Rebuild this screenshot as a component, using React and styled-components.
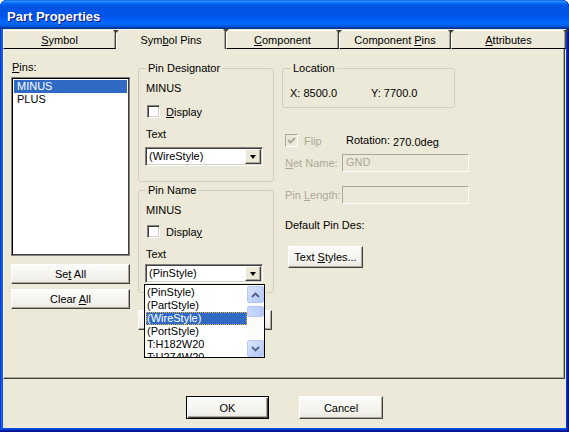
import React from 'react';
import styled, { createGlobalStyle } from 'styled-components';

const Global = createGlobalStyle`
  html, body { margin: 0; padding: 0; background: #fff; }
  body {
    width: 569px; height: 432px; overflow: hidden;
    font-family: "Liberation Sans", Arial, sans-serif; font-size: 11px; color: #000;
  }
  * { box-sizing: border-box; }
`;

const FACE = '#ECE9D8';

const Window = styled.div`
  width: 569px;
  height: 432px;
  background: #0855dd;
  border-radius: 7px 7px 0 0;
  display: flex;
  flex-direction: column;
  overflow: hidden;
  box-shadow: inset -1px -1px #00138c, inset 1px 1px #0831d9, inset -2px -2px #001ea0,
    inset 2px 2px #166aee, inset -3px -3px #003bda, inset 3px 3px #0855dd;
`;

const TitleBar = styled.div`
  height: 29px;
  flex: 0 0 29px;
  border-radius: 7px 7px 0 0;
  padding: 3px 0 0 7px;
  display: flex;
  align-items: center;
  background: linear-gradient(180deg, #0058ee 0%, #3593ff 4%, #288eff 6%, #127dff 8%, #036ffc 10%,
    #0262ee 14%, #0057e5 20%, #0054e3 24%, #0055eb 56%, #005bf5 66%, #026afe 76%, #0062ef 86%,
    #0052d6 92%, #0040ab 94%, #003092 100%);
`;

const Title = styled.span`
  font-family: "Liberation Sans", Arial, sans-serif;
  font-weight: bold;
  font-size: 13px;
  color: #fff;
  text-shadow: 1px 1px #0f1089;
`;

const Body = styled.div`
  flex: 1;
  margin: 0 3px 4px 3px;
  background: ${FACE};
  display: flex;
  flex-direction: column;
`;

const TabStrip = styled.div`
  height: 20px;
  flex: 0 0 20px;
  display: flex;
  align-items: flex-end;
`;

const Tab = styled.div`
  position: relative;
  flex: 0 0 ${p => p.$w}px;
  height: ${p => (p.$active ? 20 : 19)}px;
  display: flex;
  align-items: center;
  justify-content: center;
  padding-top: ${p => (p.$active ? 0 : 1)}px;
  background: ${FACE};
  border-top: 1px solid #fff;
  border-left: 1px solid #fff;
  border-right: 1px solid #404040;
  border-bottom: ${p => (p.$active ? 'none' : '1px solid #000')};
  box-shadow: inset -1px 0 #aca899;
  border-radius: 2px 2px 0 0;
  white-space: nowrap;
  &::after {
    content: '';
    position: absolute;
    right: -4px;
    top: -1px;
    border-left: 3px solid transparent;
    border-right: 3px solid transparent;
    border-top: 3px solid #404040;
    z-index: 2;
  }
`;

const Panel = styled.div`
  flex: 0 0 330px;
  margin-right: 1px;
  border-left: 1px solid #fff;
  border-right: 1px solid #404040;
  border-bottom: 1px solid #404040;
  box-shadow: inset -1px -1px #aca899;
  padding: 12px 0 0 7px;
  display: grid;
  grid-template-columns: 119px 136px 1fr;
  column-gap: 8px;
  align-items: start;
`;

const Column = styled.div`
  display: flex;
  flex-direction: column;
  align-items: flex-start;
`;

const Label = styled.div`
  line-height: 13px;
  height: 13px;
  white-space: nowrap;
  margin-top: ${p => p.$mt || 0}px;
  margin-left: ${p => p.$ml || 0}px;
  color: ${p => (p.$disabled ? '#aca899' : '#000')};
  flex: 0 0 auto;
  width: ${p => (p.$w ? `${p.$w}px` : 'auto')};
`;

const ListBox = styled.div`
  margin-top: 3px;
  width: 119px;
  height: 179px;
  background: #fff;
  border: 1px solid #808080;
  box-shadow: inset 1px 1px #000, inset -1px -1px #404040;
  padding: 2px 2px;
`;

const ListItem = styled.div`
  height: 13px;
  line-height: 13px;
  padding-left: 3px;
  background: ${p => (p.$selected ? '#316ac5' : 'transparent')};
  color: ${p => (p.$selected ? '#fff' : '#000')};
`;

const Button = styled.button`
  display: flex;
  align-items: center;
  justify-content: center;
  width: ${p => p.$w}px;
  height: ${p => p.$h}px;
  margin-top: ${p => p.$mt || 0}px;
  margin-left: ${p => p.$ml || 0}px;
  padding: 0;
  font-family: "Liberation Sans", Arial, sans-serif;
  font-size: 11px;
  font-weight: 400;
  color: #000;
  white-space: nowrap;
  background: linear-gradient(180deg, #fbfbf9 0%, #f3f2ec 70%, #e9e7de 100%);
  border: 1px solid;
  border-color: ${p => (p.$default ? '#000' : '#fff #404040 #404040 #fff')};
  box-shadow: ${p =>
    p.$default
      ? 'inset 1px 1px #fff, inset -1px -1px #404040, inset -2px -2px #aca899'
      : 'inset -1px -1px #aca899'};
  flex: 0 0 auto;
`;

const Group = styled.div`
  margin-top: ${p => p.$mt || 0}px;
  width: ${p => p.$w}px;
  border: 1px solid #d0d0bf;
  border-radius: 3px;
  padding: 0 ${p => p.$pr || 0}px ${p => p.$pb}px ${p => p.$pl}px;
  display: flex;
  flex-direction: column;
  align-items: flex-start;
`;

const GroupTitle = styled.div`
  margin-top: -7px;
  margin-left: 1px;
  padding: 0 2px;
  height: 13px;
  line-height: 13px;
  background: ${FACE};
  white-space: nowrap;
`;

const CheckRow = styled.div`
  display: flex;
  align-items: center;
  height: 13px;
  margin-top: ${p => p.$mt || 0}px;
  margin-left: ${p => p.$ml || 0}px;
  gap: 6px;
  width: ${p => (p.$w ? `${p.$w}px` : 'auto')};
  flex: 0 0 auto;
  color: ${p => (p.$disabled ? '#aca899' : '#000')};
`;

const CheckBox = styled.span`
  width: 13px;
  height: 13px;
  flex: 0 0 13px;
  display: flex;
  align-items: center;
  justify-content: center;
  background: ${p => (p.$disabled ? FACE : '#fff')};
  border: 1px solid;
  border-color: ${p => (p.$disabled ? '#aca899 #fff #fff #aca899' : '#808080 #fff #fff #808080')};
  box-shadow: ${p => (p.$disabled ? 'none' : 'inset 1px 1px #404040, inset -1px -1px #d4d0c8')};
`;

const ComboWrap = styled.div`
  position: relative;
  margin-top: ${p => p.$mt || 0}px;
  width: 118px;
  flex: 0 0 auto;
`;

const Combo = styled.div`
  width: 118px;
  height: 19px;
  display: flex;
  align-items: stretch;
  background: #fff;
  border: 1px solid;
  border-color: #808080 #fff #fff #808080;
  box-shadow: inset 1px 1px #404040, inset -1px -1px #d4d0c8;
  padding: 1px;
`;

const ComboText = styled.div`
  flex: 1;
  padding-left: 2px;
  line-height: 15px;
  white-space: nowrap;
  overflow: hidden;
`;

const ComboButton = styled.div`
  flex: 0 0 16px;
  display: flex;
  align-items: center;
  justify-content: center;
  background: ${FACE};
  border: 1px solid;
  border-color: #fff #404040 #404040 #fff;
  box-shadow: inset -1px -1px #aca899;
`;

const Arrow = styled.span`
  width: 0;
  height: 0;
  border-left: 3.5px solid transparent;
  border-right: 3.5px solid transparent;
  border-top: 4px solid #000;
  margin-top: 1px;
`;

const DropList = styled.div`
  position: absolute;
  top: 20px;
  left: -1px;
  width: 121px;
  height: 74px;
  z-index: 10;
  background: #fff;
  border: 1px solid #000;
  display: flex;
  overflow: hidden;
`;

const DropItems = styled.div`
  flex: 1;
  padding: 1px 0 0 1px;
  overflow: hidden;
`;

const DropItem = styled.div`
  height: 13px;
  line-height: 12px;
  padding-left: 1px;
  white-space: nowrap;
  background: ${p => (p.$selected ? '#316ac5' : 'transparent')};
  color: ${p => (p.$selected ? '#fff' : '#000')};
  outline: ${p => (p.$selected ? '1px dotted #f0b040' : 'none')};
  outline-offset: -1px;
`;

const ScrollBar = styled.div`
  flex: 0 0 17px;
  display: flex;
  flex-direction: column;
  background: #fcfcfa;
  padding-top: 1px;
`;

const ScrollBtn = styled.div`
  width: 17px;
  height: 17px;
  flex: 0 0 17px;
  display: flex;
  align-items: center;
  justify-content: center;
  border: 1px solid #b7c8f5;
  border-radius: 2px;
  background: linear-gradient(135deg, #dbe6fd 0%, #c5d6fc 50%, #b3c7f7 100%);
`;

const Thumb = styled.div`
  margin-top: 3px;
  width: 17px;
  height: 11px;
  border: 1px solid #b7c8f5;
  border-radius: 2px;
  background: linear-gradient(90deg, #cad9fd 0%, #bfd1fb 60%, #b3c6f6 100%);
`;

const Spacer = styled.div`
  flex: 1;
`;

const Row = styled.div`
  display: flex;
  align-items: center;
  margin-top: ${p => p.$mt || 0}px;
  margin-left: ${p => p.$ml || 0}px;
  height: ${p => p.$h || 13}px;
  flex: 0 0 auto;
`;

const TextInput = styled.div`
  width: 127px;
  height: 18px;
  background: ${FACE};
  border: 1px solid;
  border-color: #aca899 #fff #fff #aca899;
  color: #aca899;
  padding-left: 3px;
  line-height: 15px;
`;

const Footer = styled.div`
  flex: 1;
  display: flex;
  align-items: flex-start;
  padding: 17px 0 0 183px;
  gap: 30px;
`;

const Chevron = ({ up }) => (
  <svg width="9" height="6" viewBox="0 0 9 6">
    <path
      d={up ? 'M1 5 L4.5 1.5 L8 5' : 'M1 1 L4.5 4.5 L8 1'}
      fill="none"
      stroke="#4d6185"
      strokeWidth="1.8"
    />
  </svg>
);

const Check = () => (
  <svg width="9" height="9" viewBox="0 0 9 9">
    <path d="M1 4 L3.5 6.5 L8 2" fill="none" stroke="#aca899" strokeWidth="2" />
  </svg>
);

const tabs = [
  { w: 113, label: <span><u>S</u>ymbol</span> },
  { w: 110, label: <span>Sym<u>b</u>ol Pins</span>, active: true },
  { w: 113, label: <span><u>C</u>omponent</span> },
  { w: 112, label: <span>Component <u>P</u>ins</span> },
  { w: 115, label: <span><u>A</u>ttributes</span> },
];

const dropItems = ['(PinStyle)', '(PartStyle)', '(WireStyle)', '(PortStyle)', 'T:H182W20', 'T:H274W20'];

export default function App() {
  return (
    <>
      <Global />
      <Window>
        <TitleBar>
          <Title>Part Properties</Title>
        </TitleBar>
        <Body>
          <TabStrip>
            {tabs.map((t, i) => (
              <Tab key={i} $w={t.w} $active={t.active}>
                {t.label}
              </Tab>
            ))}
          </TabStrip>
          <Panel>
            <Column>
              <Label $ml={1}>
                <u>P</u>ins:
              </Label>
              <ListBox>
                <ListItem $selected>MINUS</ListItem>
                <ListItem>PLUS</ListItem>
              </ListBox>
              <Button $w={119} $h={20} $mt={8}>
                <span>Se<u>t</u> All</span>
              </Button>
              <Button $w={119} $h={20} $mt={5}>
                <span>Clear <u>A</u>ll</span>
              </Button>
            </Column>

            <Column>
              <Group $mt={7} $w={136} $pl={6} $pr={10} $pb={15}>
                <GroupTitle>Pin Designator</GroupTitle>
                <Label $mt={7} $ml={1}>MINUS</Label>
                <CheckRow $mt={10} $ml={2}>
                  <CheckBox />
                  <span>
                    <u>D</u>isplay
                  </span>
                </CheckRow>
                <Label $mt={10} $ml={1}>Text</Label>
                <ComboWrap $mt={6}>
                  <Combo>
                    <ComboText>(WireStyle)</ComboText>
                    <ComboButton>
                      <Arrow />
                    </ComboButton>
                  </Combo>
                </ComboWrap>
              </Group>

              <Group $mt={8} $w={136} $pl={6} $pr={10} $pb={9}>
                <GroupTitle>Pin Name</GroupTitle>
                <Label $mt={7} $ml={1}>MINUS</Label>
                <CheckRow $mt={8} $ml={2}>
                  <CheckBox />
                  <span>
                    Displa<u>y</u>
                  </span>
                </CheckRow>
                <Label $mt={10} $ml={1}>Text</Label>
                <ComboWrap $mt={3}>
                  <Combo>
                    <ComboText>(PinStyle)</ComboText>
                    <ComboButton>
                      <Arrow />
                    </ComboButton>
                  </Combo>
                  <DropList>
                    <DropItems>
                      {dropItems.map(d => (
                        <DropItem key={d} $selected={d === '(WireStyle)'}>
                          {d}
                        </DropItem>
                      ))}
                    </DropItems>
                    <ScrollBar>
                      <ScrollBtn>
                        <Chevron up />
                      </ScrollBtn>
                      <Thumb />
                      <Spacer />
                      <ScrollBtn>
                        <Chevron />
                      </ScrollBtn>
                    </ScrollBar>
                  </DropList>
                </ComboWrap>
              </Group>

              <Button $w={134} $h={20} $mt={17} />
            </Column>

            <Column>
              <Group $mt={7} $w={173} $pl={7} $pb={7}>
                <GroupTitle>Location</GroupTitle>
                <Row $mt={12}>
                  <Label $w={81}>X: 8500.0</Label>
                  <Label>Y: 7700.0</Label>
                </Row>
              </Group>

              <Row $mt={26} $ml={3}>
                <CheckRow $w={61} $disabled>
                  <CheckBox $disabled>
                    <Check />
                  </CheckBox>
                  <span>Flip</span>
                </CheckRow>
                <Label $w={47}>Rotation:</Label>
                <Label $mt={3}>270.0deg</Label>
              </Row>

              <Row $mt={7} $ml={3} $h={18}>
                <Label $w={57} $disabled>
                  <u>N</u>et Name:
                </Label>
                <TextInput>GND</TextInput>
              </Row>

              <Row $mt={14} $ml={3} $h={18}>
                <Label $w={57} $disabled>
                  Pin <u>L</u>ength:
                </Label>
                <TextInput />
              </Row>

              <Label $mt={15} $ml={3}>Default Pin Des:</Label>

              <Button $w={75} $h={22} $mt={14} $ml={6}>
                <span>Text <u>S</u>tyles...</span>
              </Button>
            </Column>
          </Panel>
          <Footer>
            <Button $w={83} $h={23} $default>
              OK
            </Button>
            <Button $w={84} $h={23}>
              Cancel
            </Button>
          </Footer>
        </Body>
      </Window>
    </>
  );
}
